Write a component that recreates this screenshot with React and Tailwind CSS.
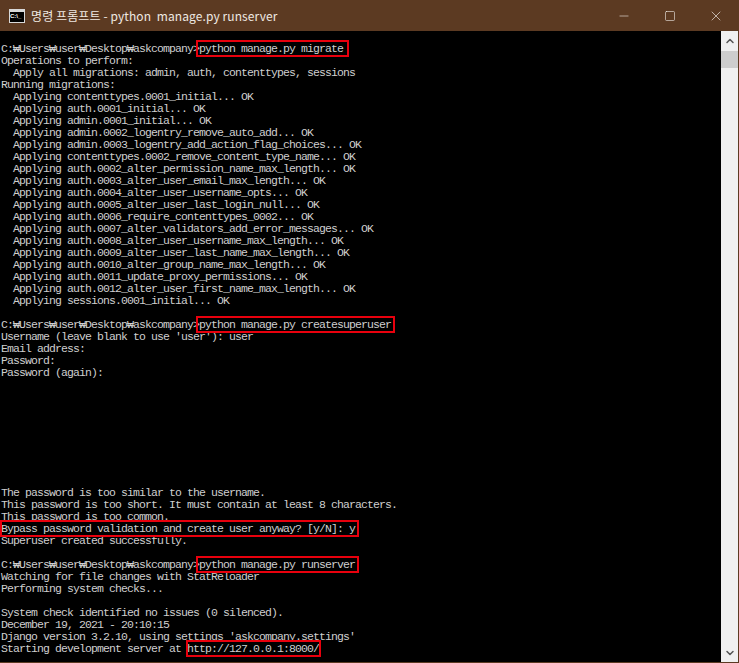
import { Minus, Square, X, ChevronUp, ChevronDown } from 'lucide-react';

const PROMPT = 'C:₩Users₩user₩Desktop₩askcompany>';

// one console row, 12px tall like the cmd raster font
const Row = ({ children }) => <div className="h-3 whitespace-pre">{children}</div>;

// red annotation box drawn over the text
const Mark = ({ children, box }) => (
  <span className="relative inline-block">
    {children}
    <span className={`absolute border-2 border-[#e8000d] ${box}`} />
  </span>
);

const Console = () => {
  return (
    <div className="flex-1 pt-[12px] pl-[1px] font-['Liberation_Mono',monospace] text-[11.5px] leading-3 tracking-[-0.9px] text-[#cfcfcf] overflow-hidden">
      <Row>{PROMPT}<Mark box="-left-[3px] -top-[3px] -bottom-[2px] -right-[6px]">python manage.py migrate</Mark></Row>
      <Row>Operations to perform:</Row>
      <Row>  Apply all migrations: admin, auth, contenttypes, sessions</Row>
      <Row>Running migrations:</Row>
      <Row>  Applying contenttypes.0001_initial... OK</Row>
      <Row>  Applying auth.0001_initial... OK</Row>
      <Row>  Applying admin.0001_initial... OK</Row>
      <Row>  Applying admin.0002_logentry_remove_auto_add... OK</Row>
      <Row>  Applying admin.0003_logentry_add_action_flag_choices... OK</Row>
      <Row>  Applying contenttypes.0002_remove_content_type_name... OK</Row>
      <Row>  Applying auth.0002_alter_permission_name_max_length... OK</Row>
      <Row>  Applying auth.0003_alter_user_email_max_length... OK</Row>
      <Row>  Applying auth.0004_alter_user_username_opts... OK</Row>
      <Row>  Applying auth.0005_alter_user_last_login_null... OK</Row>
      <Row>  Applying auth.0006_require_contenttypes_0002... OK</Row>
      <Row>  Applying auth.0007_alter_validators_add_error_messages... OK</Row>
      <Row>  Applying auth.0008_alter_user_username_max_length... OK</Row>
      <Row>  Applying auth.0009_alter_user_last_name_max_length... OK</Row>
      <Row>  Applying auth.0010_alter_group_name_max_length... OK</Row>
      <Row>  Applying auth.0011_update_proxy_permissions... OK</Row>
      <Row>  Applying auth.0012_alter_user_first_name_max_length... OK</Row>
      <Row>  Applying sessions.0001_initial... OK</Row>
      <Row> </Row>
      <Row>{PROMPT}<Mark box="-left-[3px] -top-[3px] -bottom-[2px] -right-[4px]">python manage.py createsuperuser</Mark></Row>
      <Row>Username (leave blank to use 'user'): user</Row>
      <Row>Email address:</Row>
      <Row>Password:</Row>
      <Row>Password (again):</Row>
      <div className="h-[108px]" />
      <Row>The password is too similar to the username.</Row>
      <Row>This password is too short. It must contain at least 8 characters.</Row>
      <Row>This password is too common.</Row>
      <Row><Mark box="-left-[1px] -top-[3px] -bottom-[2px] -right-[4px]">Bypass password validation and create user anyway? [y/N]: y</Mark></Row>
      <Row>Superuser created successfully.</Row>
      <Row> </Row>
      <Row>{PROMPT}<Mark box="-left-[3px] -top-[3px] -bottom-[2px] -right-[4px]">python manage.py runserver</Mark></Row>
      <Row>Watching for file changes with StatReloader</Row>
      <Row>Performing system checks...</Row>
      <Row> </Row>
      <Row>System check identified no issues (0 silenced).</Row>
      <Row>December 19, 2021 - 20:10:15</Row>
      <Row>Django version 3.2.10, using settings 'askcompany.settings'</Row>
      <Row>Starting development server at <Mark box="-left-[1px] -top-[3px] -bottom-[2px] -right-[2px]">http://127.0.0.1:8000/</Mark></Row>
    </div>
  );
};

const App = () => {
  return (
    <div className="w-[739px] h-[663px] flex flex-col bg-[#5c3a22] overflow-hidden">
      <div className="h-[31px] flex items-center shrink-0">
        <div className="ml-[9px] w-[16px] h-[14px] bg-[#d8d8d8] p-[1px] pt-[3px]">
          <div className="w-full h-full bg-black text-[6px] leading-[8px] font-bold text-white font-['Liberation_Sans',sans-serif] overflow-hidden">C:\_</div>
        </div>
        <div className="ml-[6px] whitespace-pre text-[12px] tracking-[0.1px] text-[#efe9e3] font-['Noto_Sans_CJK_KR','Noto_Sans',sans-serif]">명령 프롬프트 - python  manage.py runserver</div>
        <div className="ml-auto flex items-center text-[#f4f0ec]">
          <div className="w-[46px] flex justify-center"><Minus size={14} strokeWidth={1} /></div>
          <div className="w-[46px] flex justify-center"><Square size={12} strokeWidth={1.2} /></div>
          <div className="w-[46px] flex justify-center pr-[1px]"><X size={16} strokeWidth={1} /></div>
        </div>
      </div>
      <div className="flex-1 flex min-h-0 pr-[1px] pb-[1px]">
        <div className="flex-1 flex bg-black min-w-0">
          <Console />
        </div>
        <div className="w-[17px] shrink-0 bg-[#f0f0f0] flex flex-col items-center">
          <div className="h-[20px] flex items-center text-[#555555]"><ChevronUp size={12} strokeWidth={3} /></div>
          <div className="w-full h-[17px] bg-[#cdcdcd]" />
          <div className="mt-auto h-[18px] flex items-center text-[#555555]"><ChevronDown size={12} strokeWidth={3} /></div>
        </div>
      </div>
    </div>
  );
};

export default App;
